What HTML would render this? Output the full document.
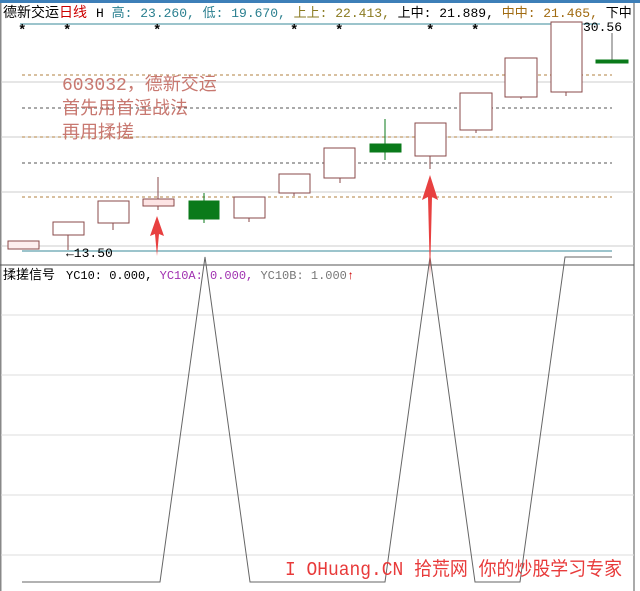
<!DOCTYPE html>
<html><head><meta charset="utf-8"><style>
body{margin:0;width:640px;height:591px;overflow:hidden;background:#fff}
svg{display:block}
text{font-family:"Liberation Mono","Noto Sans CJK SC",monospace}
</style></head><body>
<svg width="640" height="591" xmlns="http://www.w3.org/2000/svg">
<rect x="0" y="0" width="640" height="3" fill="#3d7fb8"/>
<rect x="0" y="3" width="1.5" height="588" fill="#888"/>
<line x1="634" y1="3" x2="634" y2="591" stroke="#555"/>
<text x="3" y="17" font-size="14" fill="#000" font-family="Liberation Sans,Noto Sans CJK SC,sans-serif">德新交运<tspan fill="#c00">日线</tspan></text>
<text x="96" y="17" font-size="13" fill="#000">H <tspan fill="#2a7f8f">高: 23.260, 低: 19.670,</tspan> <tspan fill="#8a7a20">上上: 22.413,</tspan> 上中: 21.889, <tspan fill="#a06a10">中中: 21.465,</tspan> 下中</text>
<line x1="20" y1="24" x2="600" y2="24" stroke="#3a8a9a"/>
<g fill="#000" font-size="14" font-weight="bold"><text x="18" y="34">*</text><text x="63" y="34">*</text><text x="153" y="34">*</text><text x="290" y="34">*</text><text x="335" y="34">*</text><text x="426" y="34">*</text><text x="471" y="34">*</text><text x="562" y="34">*</text></g>
<g stroke="#ccc"><line x1="1" y1="82" x2="634" y2="82"/><line x1="1" y1="137" x2="634" y2="137"/><line x1="1" y1="192" x2="634" y2="192"/><line x1="1" y1="246" x2="634" y2="246"/></g>
<g stroke-dasharray="3,3"><line x1="22" y1="75" x2="612" y2="75" stroke="#b08040"/><line x1="22" y1="108" x2="612" y2="108" stroke="#555"/><line x1="22" y1="137" x2="612" y2="137" stroke="#b08040"/><line x1="22" y1="163" x2="612" y2="163" stroke="#555"/><line x1="22" y1="197" x2="612" y2="197" stroke="#b08040"/></g>
<line x1="22" y1="251" x2="612" y2="251" stroke="#3a8a9a"/>
<text x="66" y="257" font-size="13" fill="#000">←13.50</text>
<text x="583" y="31" font-size="13" fill="#000">30.56</text>
<g stroke="#8a4a4a" fill="#fff">
<rect x="8" y="241" width="31" height="8" fill="#fdeeee"/>
<line x1="68" y1="235" x2="68" y2="250"/><rect x="53" y="222" width="31" height="13"/>
<line x1="113" y1="223" x2="113" y2="230"/><rect x="98" y="201" width="31" height="22"/>
<line x1="158" y1="177" x2="158" y2="210"/><rect x="143" y="199" width="31" height="7" fill="#fde4e4"/>
<line x1="249" y1="218" x2="249" y2="222"/><rect x="234" y="197" width="31" height="21"/>
<line x1="294" y1="193" x2="294" y2="196"/><rect x="279" y="174" width="31" height="19"/>
<line x1="340" y1="178" x2="340" y2="183"/><rect x="324" y="148" width="31" height="30"/>
<line x1="430" y1="156" x2="430" y2="169"/><rect x="415" y="123" width="31" height="33"/>
<line x1="476" y1="130" x2="476" y2="133"/><rect x="460" y="93" width="32" height="37"/>
<line x1="521" y1="97" x2="521" y2="99"/><rect x="505" y="58" width="32" height="39"/>
<line x1="566" y1="92" x2="566" y2="96"/><rect x="551" y="22" width="31" height="70"/>
</g>
<g stroke="#0a7a1a" fill="#0a7a1a">
<line x1="204" y1="193" x2="204" y2="223"/><rect x="189" y="201" width="30" height="18"/>
<line x1="385" y1="119" x2="385" y2="160"/><rect x="370" y="144" width="31" height="8"/>
<line x1="612" y1="33" x2="612" y2="62" stroke="#666"/><rect x="596" y="60" width="32" height="3"/>
</g>
<g font-family="Liberation Serif,Noto Serif CJK SC,serif" font-size="18" fill="#c87870">
<text x="62" y="90">603032，德新交运</text><text x="62" y="114">首先用首淫战法</text><text x="62" y="138">再用揉搓</text></g>
<line x1="0" y1="265" x2="634" y2="265" stroke="#555"/>
<text x="3" y="279" font-size="13" fill="#000" font-family="Liberation Sans,Noto Sans CJK SC,sans-serif">揉搓信号</text>
<text x="66" y="279" font-size="12" fill="#000">YC10: 0.000, <tspan fill="#a030b0">YC10A: 0.000,</tspan> <tspan fill="#777">YC10B: 1.000</tspan><tspan fill="#c00">↑</tspan></text>
<g stroke="#ddd"><line x1="1" y1="315" x2="634" y2="315"/><line x1="1" y1="375" x2="634" y2="375"/><line x1="1" y1="435" x2="634" y2="435"/><line x1="1" y1="495" x2="634" y2="495"/><line x1="1" y1="555" x2="634" y2="555"/></g>
<polyline points="22,582 160,582 205,257 250,582 385,582 430,257 475,582 520,582 565,257 612,257" fill="none" stroke="#666" stroke-width="1"/>
<g fill="#e84040"><polygon points="157,216 150,236 155,234 157,256 159,234 164,236"/><polygon points="430,175 422,200 428,197 430,278 432,197 438,200"/></g>
<text x="285" y="575" font-size="19" fill="#e83a3a" font-family="Liberation Sans,Noto Sans CJK SC,sans-serif" textLength="337" lengthAdjust="spacingAndGlyphs">I OHuang.CN 拾荒网 你的炒股学习专家</text>
</svg>
</body></html>
